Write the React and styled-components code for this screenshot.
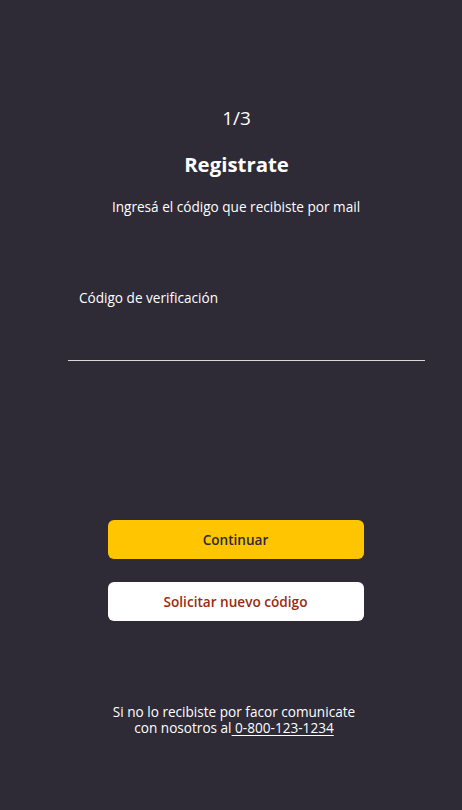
import React from "react";
import styled, { createGlobalStyle } from "styled-components";

const Global = createGlobalStyle`
  html, body {
    margin: 0;
    padding: 0;
    background: #2e2a36;
  }
  body {
    font-family: "Open Sans", "Noto Sans", sans-serif;
    color: #fff;
  }
`;

const Screen = styled.div`
  width: 462px;
  height: 810px;
  background: #2e2a36;
  display: flex;
  flex-direction: column;
  align-items: center;
  box-sizing: border-box;
  padding-top: 106px;
`;

const Step = styled.div`
  font-size: 19px;
  line-height: 24px;
  margin-left: 11px;
`;

const Title = styled.h1`
  margin: 20px 0 0 11px;
  font-size: 20.4px;
  line-height: 28px;
  font-weight: 700;
`;

const Subtitle = styled.p`
  margin: 19px 0 0 10px;
  font-size: 13.6px;
  line-height: 20px;
`;

const Field = styled.label`
  align-self: stretch;
  margin: 71px 37px 0 68px;
  display: flex;
  flex-direction: column;
`;

const Label = styled.span`
  font-size: 13.6px;
  line-height: 20px;
  padding-left: 11px;
`;

const Input = styled.input`
  margin-top: 20px;
  height: 32px;
  background: transparent;
  border: none;
  border-bottom: 1px solid #d9d9dc;
  color: #fff;
  font-family: inherit;
  font-size: 14px;
  outline: none;
  padding: 0 11px;
`;

const Actions = styled.div`
  margin-top: 159px;
  margin-left: 9px;
  display: flex;
  flex-direction: column;
  gap: 23px;
`;

const Button = styled.button`
  width: 256px;
  height: 39px;
  border-radius: 6px;
  border: none;
  font-family: inherit;
  font-size: 13.6px;
  font-weight: 600;
  cursor: pointer;
  background: ${(p) => (p.$primary ? "#ffc600" : "#ffffff")};
  color: ${(p) => (p.$primary ? "#2e2a36" : "#9a2a12")};
`;

const Footer = styled.p`
  margin: 83px 0 0 6px;
  font-size: 13.6px;
  line-height: 16px;
  text-align: center;
`;

const Phone = styled.a`
  color: #fff;
  text-decoration: underline;
  text-underline-offset: 2px;
`;

export default function App() {
  return (
    <>
      <Global />
      <Screen>
        <Step>1/3</Step>
        <Title>Registrate</Title>
        <Subtitle>Ingresá el código que recibiste por mail</Subtitle>
        <Field>
          <Label>Código de verificación</Label>
          <Input type="text" />
        </Field>
        <Actions>
          <Button $primary>Continuar</Button>
          <Button>Solicitar nuevo código</Button>
        </Actions>
        <Footer>
          Si no lo recibiste por facor comunicate
          <br />
          con nosotros al<Phone href="#"> 0-800-123-1234</Phone>
        </Footer>
      </Screen>
    </>
  );
}
